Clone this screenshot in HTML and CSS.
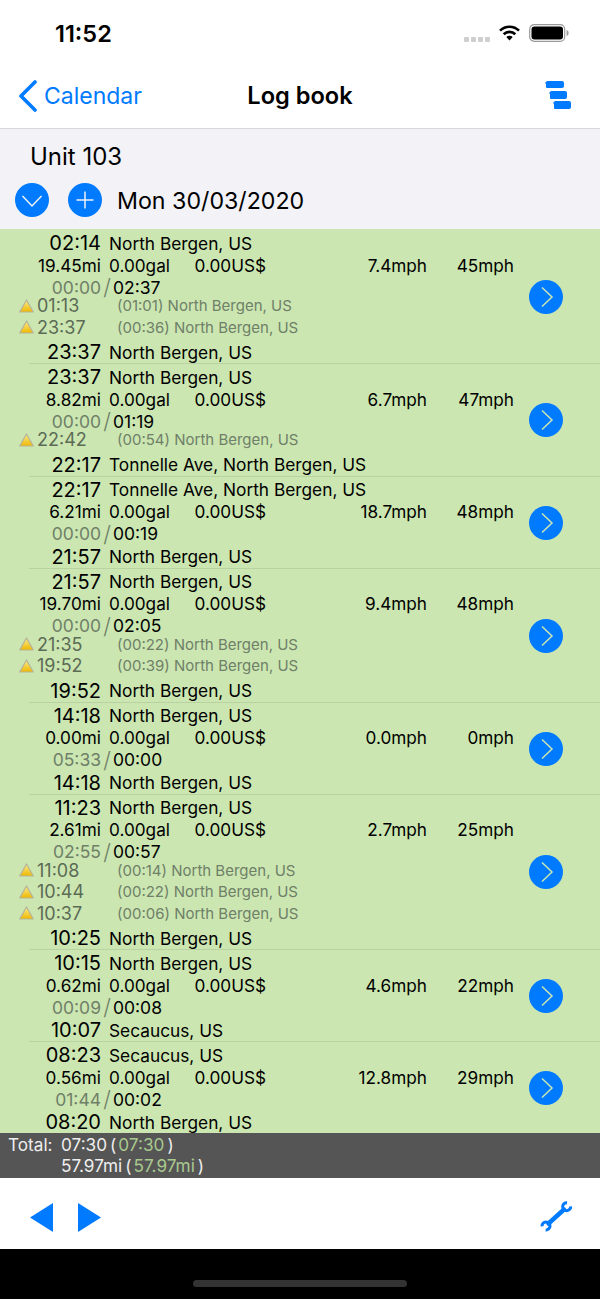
FILE: index.html
```html
<!DOCTYPE html>
<html lang="en">

    <head>
        <meta charset="UTF-8">
        <meta name="viewport" content="width=device-width, initial-scale=1.0">
        <title>Log book</title>

        <link rel="stylesheet" href="styles.css">
    </head>

    <body>
        <svg class="defs" width="0" height="0">
            <defs>
                <linearGradient id="warnFill" x1="0" y1="0" x2="0" y2="1">
                    <stop offset="0" stop-color="#fbeb8a"></stop>
                    <stop offset="1" stop-color="#efb800"></stop>
                </linearGradient>
                <symbol id="warn" viewBox="0 0 15 14">
                    <path d="M7.5 1 L14.3 13 H0.7 Z" fill="url(#warnFill)" stroke="#b5b39a" stroke-width="1.2" stroke-linejoin="round"></path>
                </symbol>
                <symbol id="go" viewBox="0 0 34 34">
                    <circle cx="17" cy="17" r="17" fill="#007aff"></circle>
                    <path d="M13 7.5 L23 17 L13 26.5" fill="none" stroke="#cbe6b1" stroke-width="1.5"></path>
                </symbol>
            </defs>
        </svg>

        <div class="phone">
            <div class="status">
                <span class="clock">11:52</span>
                <div class="status-icons">
                    <div class="dots"><i></i><i></i><i></i><i></i></div>
                    <svg class="wifi" width="21" height="16" viewBox="0 0 21 16">
                        <path d="M1 5.6 A13.5 13.5 0 0 1 20 5.6" fill="none" stroke="#000" stroke-width="2.6"></path>
                        <path d="M4.7 9.2 A8.3 8.3 0 0 1 16.3 9.2" fill="none" stroke="#000" stroke-width="2.6"></path>
                        <path d="M7.3 12 L10.5 15.6 L13.7 12 A4.6 4.6 0 0 0 7.3 12 Z" fill="#000"></path>
                    </svg>
                    <svg width="40" height="18" viewBox="0 0 40 18">
                        <rect x="0.7" y="0.7" width="35" height="16.6" rx="4.5" fill="none" stroke="#9a9a9a" stroke-width="1.2"></rect>
                        <rect x="2.5" y="2.5" width="31.5" height="13" rx="3" fill="#000"></rect>
                        <path d="M37.6 6 C39 6.4 39.6 7.6 39.6 9 C39.6 10.4 39 11.6 37.6 12 Z" fill="#9a9a9a"></path>
                    </svg>
                </div>
            </div>

            <div class="nav">
                <div class="back">
                    <svg width="20" height="32" viewBox="0 0 20 32">
                        <path d="M17 2 L3 16 L17 30" fill="none" stroke="#007aff" stroke-width="3.6" stroke-linecap="round" stroke-linejoin="round"></path>
                    </svg>
                    <span>Calendar</span>
                </div>
                <div class="nav-title">Log book</div>
                <svg class="nav-stack" width="30" height="32" viewBox="0 0 30 32">
                    <path d="M4 3 L6 1 H21 Q23 1 23 3 V6 Q23 8 21 8 H6 Q5 8 5 7 V4 Z" fill="#007aff"></path>
                    <path d="M8 13 L10 11 H24 Q26 11 26 13 V17 Q26 19 24 19 H10 Q9 19 9 18 V14 Z" fill="#007aff"></path>
                    <path d="M12 23 L14 21 H28 Q30 21 30 23 V27 Q30 29 28 29 H14 Q13 29 13 28 V24 Z" fill="#007aff"></path>
                </svg>
            </div>

            <div class="head">
                <div class="unit">Unit 103</div>
                <div class="date-row">
                    <svg width="34" height="34" viewBox="0 0 34 34">
                        <circle cx="17" cy="17" r="17" fill="#007aff"></circle>
                        <path d="M7.5 13 L17 23 L26.5 13" fill="none" stroke="#f2f2f7" stroke-width="1.5"></path>
                    </svg>
                    <svg width="34" height="34" viewBox="0 0 34 34">
                        <circle cx="17" cy="17" r="17" fill="#007aff"></circle>
                        <path d="M17 8.5 V25.5 M8.5 17 H25.5" fill="none" stroke="#f2f2f7" stroke-width="1.5"></path>
                    </svg>
                    <span class="date">Mon 30/03/2020</span>
                </div>
            </div>

            <div class="list" id="list"></div>

            <div class="total">
                <div class="total-line"><span class="total-label">Total:</span><span>07:30</span><span class="paren">(</span><span class="total-green">07:30</span><span class="paren">)</span></div>
                <div class="total-line"><span class="total-label"></span><span>57.97mi</span><span class="paren">(</span><span class="total-green">57.97mi</span><span class="paren">)</span></div>
            </div>

            <div class="tools">
                <div class="arrows">
                    <svg width="23" height="29" viewBox="0 0 24 29" preserveAspectRatio="none"><path d="M0 14.5 L24 0 V29 Z" fill="#007aff"></path></svg>
                    <svg width="23" height="29" viewBox="0 0 24 29" preserveAspectRatio="none"><path d="M24 14.5 L0 0 V29 Z" fill="#007aff"></path></svg>
                </div>
                <svg width="32" height="32" viewBox="0 0 32 32">
                    <path d="M8.5 22.5 L24 8.5" stroke="#007aff" stroke-width="4.4" stroke-linecap="round"></path>
                    <path d="M27.05 1.72 A4 4 0 1 0 30.68 5.35" fill="none" stroke="#007aff" stroke-width="3"></path>
                    <path d="M5.65 28.98 A4 4 0 1 0 2.02 25.35" fill="none" stroke="#007aff" stroke-width="3"></path>
                </svg>
            </div>

            <div class="home"><div class="home-bar"></div></div>
        </div>

        <script>
            let list = document.getElementById( "list" );
            let arrTrips = [
                { start: "02:14", from: "North Bergen, US", dist: "19.45mi", speed: "7.4mph", max: "45mph", idle: "00:00", drive: "02:37", end: "23:37", to: "North Bergen, US",
                    stops: [ [ "01:13", "(01:01) North Bergen, US" ], [ "23:37", "(00:36) North Bergen, US" ] ] },
                { start: "23:37", from: "North Bergen, US", dist: "8.82mi", speed: "6.7mph", max: "47mph", idle: "00:00", drive: "01:19", end: "22:17", to: "Tonnelle Ave, North Bergen, US",
                    stops: [ [ "22:42", "(00:54) North Bergen, US" ] ] },
                { start: "22:17", from: "Tonnelle Ave, North Bergen, US", dist: "6.21mi", speed: "18.7mph", max: "48mph", idle: "00:00", drive: "00:19", end: "21:57", to: "North Bergen, US", stops: [] },
                { start: "21:57", from: "North Bergen, US", dist: "19.70mi", speed: "9.4mph", max: "48mph", idle: "00:00", drive: "02:05", end: "19:52", to: "North Bergen, US",
                    stops: [ [ "21:35", "(00:22) North Bergen, US" ], [ "19:52", "(00:39) North Bergen, US" ] ] },
                { start: "14:18", from: "North Bergen, US", dist: "0.00mi", speed: "0.0mph", max: "0mph", idle: "05:33", drive: "00:00", end: "14:18", to: "North Bergen, US", stops: [] },
                { start: "11:23", from: "North Bergen, US", dist: "2.61mi", speed: "2.7mph", max: "25mph", idle: "02:55", drive: "00:57", end: "10:25", to: "North Bergen, US",
                    stops: [ [ "11:08", "(00:14) North Bergen, US" ], [ "10:44", "(00:22) North Bergen, US" ], [ "10:37", "(00:06) North Bergen, US" ] ] },
                { start: "10:15", from: "North Bergen, US", dist: "0.62mi", speed: "4.6mph", max: "22mph", idle: "00:09", drive: "00:08", end: "10:07", to: "Secaucus, US", stops: [] },
                { start: "08:23", from: "Secaucus, US", dist: "0.56mi", speed: "12.8mph", max: "29mph", idle: "01:44", drive: "00:02", end: "08:20", to: "North Bergen, US", stops: [] },
            ];

            function placeLine( time, place ) {
                return `<div class="line"><span class="time">${ time }</span><span class="place">${ place }</span></div>`;
            }

            for ( let i = 0; i < arrTrips.length; i++ ) {
                let t = arrTrips[ i ];
                let stops = "";
                for ( let j = 0; j < t.stops.length; j++ ) {
                    stops += `<div class="stop"><svg class="warn" width="15" height="14"><use href="#warn"></use></svg><span class="stop-time">${ t.stops[ j ][ 0 ] }</span><span class="stop-note">${ t.stops[ j ][ 1 ] }</span></div>`;
                }
                let trip = document.createElement( "div" );
                trip.className = "trip";
                trip.innerHTML = `
                    <div class="trip-body">
                        ${ placeLine( t.start, t.from ) }
                        <div class="stats">
                            <span class="dist">${ t.dist }</span>
                            <span class="gal">0.00gal</span>
                            <span class="cost">0.00US$</span>
                            <span class="speed">${ t.speed }</span>
                            <span class="max">${ t.max }</span>
                        </div>
                        <div class="line duration"><span class="idle">${ t.idle }</span><span class="slash">/</span><span>${ t.drive }</span></div>
                        ${ stops ? `<div class="stops">${ stops }</div>` : "" }
                        ${ placeLine( t.end, t.to ) }
                    </div>
                    <svg class="go" width="34" height="34"><use href="#go"></use></svg>`;
                list.appendChild( trip );
                if ( i < arrTrips.length - 1 ) {
                    let sep = document.createElement( "div" );
                    sep.className = "sep";
                    list.appendChild( sep );
                }
            }
        </script>
    </body>

</html>
```

FILE: styles.css
```css
body {
    margin: 0;
    font-family: Inter, "Liberation Sans", sans-serif;
    color: #000;
    background-color: #000;
}

.defs {
    position: absolute;
}

.phone {
    width: 600px;
    height: 1299px;
    display: flex;
    flex-direction: column;
    overflow: hidden;
    background-color: #fff;
}

.status {
    height: 72px;
    flex: none;
    display: flex;
    justify-content: space-between;
    padding: 23px 31px 0 55px;
    box-sizing: border-box;
}

.clock {
    font-size: 23.5px;
    font-weight: 600;
    line-height: 22px;
}

.status-icons {
    display: flex;
    align-items: flex-start;
    gap: 9px;
    padding-top: 1px;
}

.wifi {
    margin-top: 1px;
}

.dots {
    display: flex;
    gap: 2px;
    margin-top: 13px;
}

.dots i {
    width: 5px;
    height: 5px;
    border-radius: 1px;
    background-color: #cfcfcf;
}

.nav {
    height: 57px;
    flex: none;
    display: flex;
    align-items: center;
    justify-content: space-between;
    padding: 0 29px 9px 18px;
    box-sizing: border-box;
    border-bottom: 1px solid #d8d8dc;
    position: relative;
}

.back {
    display: flex;
    align-items: center;
    gap: 6px;
    color: #007aff;
    font-size: 23px;
}

.nav-title {
    position: absolute;
    left: 0;
    right: 0;
    text-align: center;
    font-size: 23.6px;
    font-weight: 600;
    pointer-events: none;
}

.head {
    height: 100px;
    flex: none;
    box-sizing: border-box;
    background-color: #f2f2f7;
    padding: 13px 0 0 15px;
}

.unit {
    margin-left: 15px;
    font-size: 24px;
    line-height: 30px;
}

.date-row {
    display: flex;
    align-items: center;
    gap: 19px;
    margin-top: 11px;
}

.date {
    margin-left: -4px;
    padding-top: 1px;
    font-size: 23.2px;
}

.list {
    flex: 1;
    min-height: 0;
    overflow: hidden;
    padding-top: 1px;
    background-color: #cbe6b1;
}

.trip {
    display: flex;
    align-items: center;
    padding-top: 2px;
}

.trip-body {
    width: 529px;
    flex: none;
}

.go {
    flex: none;
    margin-top: -1px;
}

.sep {
    height: 1px;
    margin-left: 29px;
    background-color: #b9d2a2;
}

.line {
    display: flex;
    height: 22px;
    align-items: center;
    font-size: 17.3px;
    white-space: nowrap;
}

.time {
    width: 101px;
    text-align: right;
    font-size: 20px;
}

.place {
    margin-left: 8px;
}

.stats {
    display: grid;
    grid-template-columns: 101px 65px 100px 161px 87px;
    height: 22px;
    align-items: center;
    font-size: 17.2px;
    white-space: nowrap;
}

.gal {
    margin-left: 8px;
}

.cost,
.speed,
.max,
.dist {
    text-align: right;
}

.duration {
    font-size: 17.5px;
}

.duration + .line {
    margin-top: 1px;
}

.idle {
    width: 101px;
    text-align: right;
    color: #6f7f68;
}

.slash {
    width: 12px;
    text-align: center;
    color: #6f7f68;
    font-size: 22px;
    font-weight: 300;
}

.stops {
    margin: -3px 0 3px;
}

.stop {
    display: flex;
    align-items: center;
    height: 21.5px;
    padding-left: 19px;
    white-space: nowrap;
}

.warn {
    flex: none;
    margin-right: 3px;
}

.stop-time {
    width: 80px;
    font-size: 18px;
    color: #5c6b55;
}

.stop-note {
    font-size: 15px;
    color: #6f7f68;
}

.total {
    height: 45px;
    flex: none;
    box-sizing: border-box;
    padding: 1px 0 0 8px;
    background-color: #555;
    color: #eee;
    font-size: 17.2px;
}

.total-line {
    display: flex;
    height: 21px;
    align-items: center;
}

.total-label {
    width: 53px;
}

.paren {
    margin: 0 2px 0 3px;
}

.total-green {
    color: #a9c98f;
}

.tools {
    height: 71px;
    flex: none;
    display: flex;
    align-items: center;
    justify-content: space-between;
    padding: 7px 28px 0 30px;
    box-sizing: border-box;
    background-color: #fff;
}

.arrows {
    display: flex;
    gap: 25px;
}

.home {
    height: 50px;
    flex: none;
    background-color: #000;
    display: flex;
    justify-content: center;
    padding-top: 31px;
    box-sizing: border-box;
}

.home-bar {
    width: 214px;
    height: 7px;
    border-radius: 4px;
    background-color: #333;
}
```
